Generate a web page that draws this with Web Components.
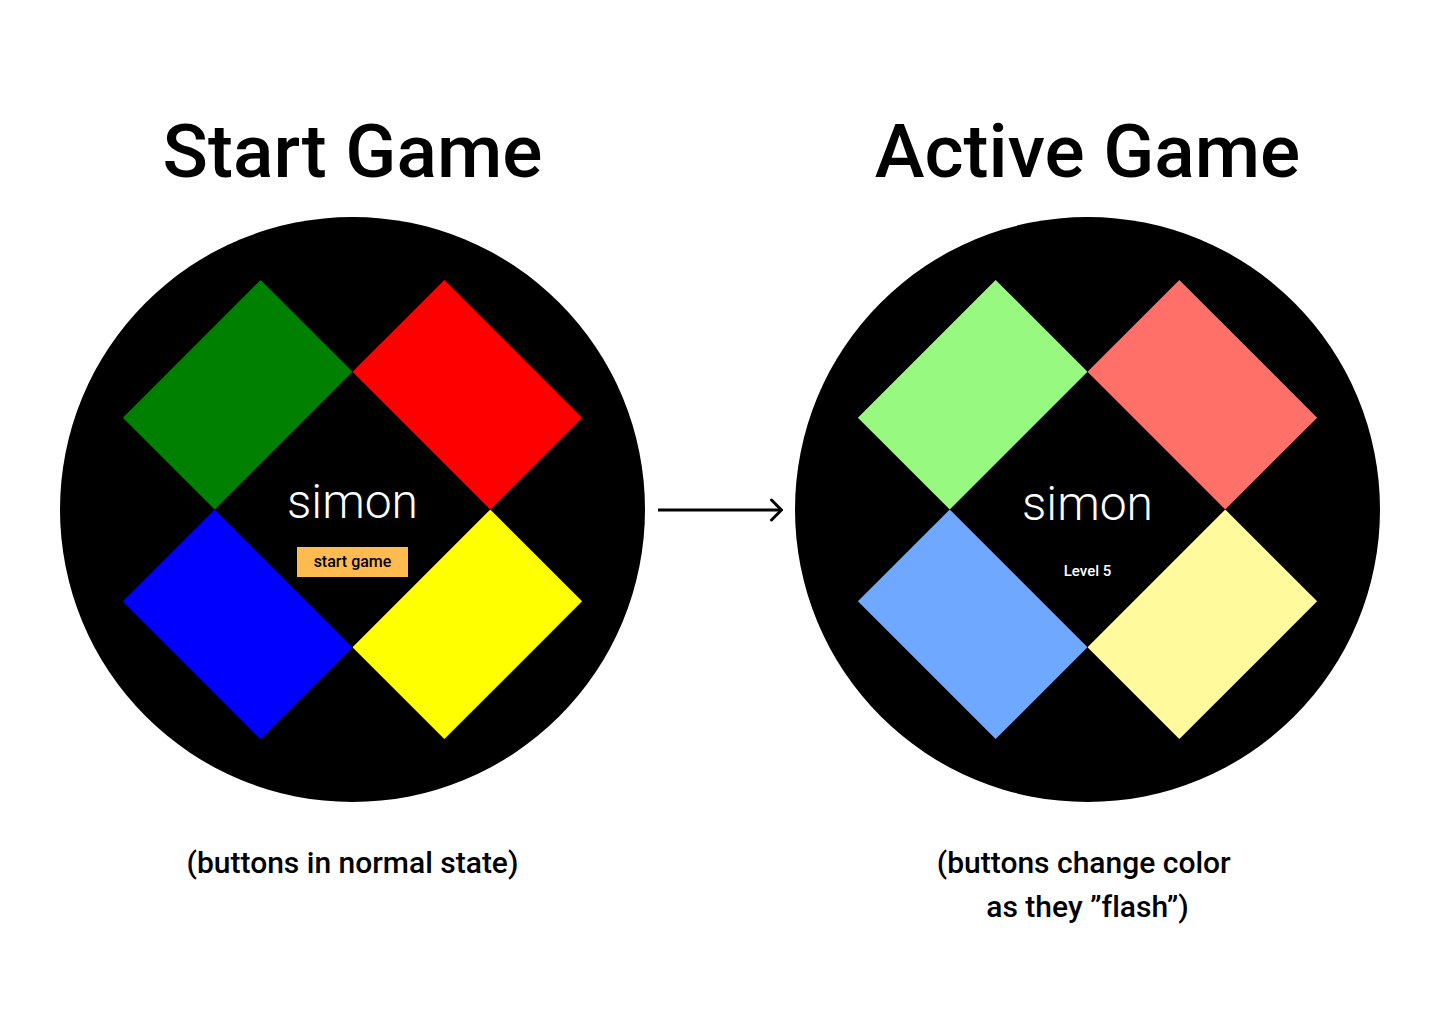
<!DOCTYPE html>
<html lang="en">
<head>
<meta charset="utf-8">
<meta name="viewport" content="width=device-width, initial-scale=1">
<title>Simon</title>
<style>
  body { margin: 0; background: #fff; color: #000; font-family: Roboto, "Liberation Sans", sans-serif; font-weight: 500; font-variant-ligatures: none; }
</style>
</head>
<body>
<game-flow>
  <simon-board heading="Start Game" colors="#008000 #ff0000 #0000ff #ffff00">
    <start-button slot="status">start game</start-button>
    <span slot="caption">(buttons in normal state)</span>
  </simon-board>
  <flow-arrow></flow-arrow>
  <simon-board class="active" heading="Active Game" colors="#98f980 #ff7069 #6ea8ff #fffb9c">
    <level-label slot="status">Level 5</level-label>
    <span slot="caption">(buttons change color&nbsp;<br>as they ”flash”)</span>
  </simon-board>
</game-flow>
<script>
class GameFlow extends HTMLElement {
  constructor() {
    super();
    this.attachShadow({ mode: 'open' }).innerHTML = `
      <style>
        :host { display: block; }
        main { display: grid; grid-template-columns: 1fr 150px 1fr; grid-template-rows: auto auto auto; padding: 107px 60px 60px; }
        ::slotted(simon-board) { grid-row: 1 / span 3; }
        ::slotted(flow-arrow) { grid-row: 2; grid-column: 2; align-self: center; }
        ::slotted(.active) { --hub-drop: 35px; --hub-gap: 31px; }
      </style>
      <main><slot></slot></main>`;
  }
}

class SimonBoard extends HTMLElement {
  constructor() {
    super();
    this.attachShadow({ mode: 'open' });
  }
  connectedCallback() {
    const names = ['green', 'red', 'blue', 'yellow'];
    const pads = this.getAttribute('colors').split(' ')
      .map((c, i) => `<button type="button" class="pad ${names[i]}" style="background:${c}" aria-label="${names[i]}"></button>`)
      .join('');
    this.shadowRoot.innerHTML = `
      <style>
        :host { display: grid; grid-template-rows: subgrid; text-align: center; }
        h1 { margin: 0 0 22px; font-size: 75px; line-height: 88px; font-weight: 500; }
        .disc { display: grid; place-items: center; aspect-ratio: 1; border-radius: 50%; background: #000; }
        .pads, .hub { grid-area: 1 / 1; }
        .pads { display: grid; grid-template: 1fr 1fr / 1fr 1fr; width: 78.5%; aspect-ratio: 1; }
        .pad { border: 0; padding: 0; cursor: pointer; }
        .green, .yellow { clip-path: polygon(60% 0, 100% 40%, 40% 100%, 0 60%); }
        .red, .blue { clip-path: polygon(40% 0, 100% 60%, 60% 100%, 0 40%); }
        .hub { display: flex; flex-direction: column; align-items: center; gap: var(--hub-gap, 17px); padding-top: var(--hub-drop, 31px); color: #fff; }
        h2 { margin: 0; font-size: 48px; line-height: 56px; font-weight: 300; }
        p { margin: 39px 0 0; font-size: 30px; line-height: 44px; }
      </style>
      <h1>${this.getAttribute('heading')}</h1>
      <div class="disc">
        <div class="pads">${pads}</div>
        <div class="hub"><h2>simon</h2><slot name="status"></slot></div>
      </div>
      <p><slot name="caption"></slot></p>`;
  }
}

class StartButton extends HTMLElement {
  constructor() {
    super();
    this.attachShadow({ mode: 'open' }).innerHTML = `
      <style>
        :host { display: block; }
        button { display: block; border: 0; padding: 0 17px; font: inherit; font-size: 16px; line-height: 30px; background: #ffbb50; color: #000; cursor: pointer; }
      </style>
      <button type="button"><slot></slot></button>`;
  }
}

class LevelLabel extends HTMLElement {
  constructor() {
    super();
    this.attachShadow({ mode: 'open' }).innerHTML = `
      <style>:host { display: block; font-size: 15px; line-height: 16px; }</style>
      <slot></slot>`;
  }
}

class FlowArrow extends HTMLElement {
  constructor() {
    super();
    this.attachShadow({ mode: 'open' }).innerHTML = `
      <style>:host { display: block; padding: 0 12px 0 13px; } svg { display: block; width: 100%; }</style>
      <svg viewBox="0 0 125 24" fill="none" stroke="#000" stroke-width="3" aria-hidden="true">
        <path d="M0 12H123"/><path d="M113.500 2L123.500 12L113.500 22" stroke-linecap="round"/>
      </svg>`;
  }
}

customElements.define('game-flow', GameFlow);
customElements.define('simon-board', SimonBoard);
customElements.define('start-button', StartButton);
customElements.define('level-label', LevelLabel);
customElements.define('flow-arrow', FlowArrow);
</script>
</body>
</html>
